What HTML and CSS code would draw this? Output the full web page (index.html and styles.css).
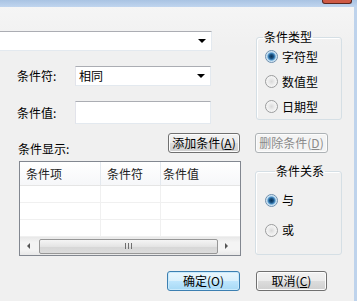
FILE: index.html
```html
<!DOCTYPE html>
<html lang="zh">
<head>
    <meta charset="utf-8">
    <title>条件</title>
    <link rel="stylesheet" href="styles.css">
</head>
<body>
    <div class="window">
        <div class="titlebar"><span class="close"></span></div>
        <div class="client">
            <div class="top">
                <div class="form">
                    <div class="combo wide"><span class="val"></span><span class="arrow"></span></div>
                    <div class="field">
                        <span class="label">条件符:</span>
                        <div class="combo"><span class="val">相同</span><span class="arrow"></span></div>
                    </div>
                    <div class="field">
                        <span class="label">条件值:</span>
                        <div class="textbox"></div>
                    </div>
                </div>
                <fieldset class="group type">
                    <legend>条件类型</legend>
                    <div class="radio"><span class="dot checked"></span>字符型</div>
                    <div class="radio"><span class="dot"></span>数值型</div>
                    <div class="radio"><span class="dot"></span>日期型</div>
                </fieldset>
            </div>

            <div class="actions">
                <span class="label show">条件显示:</span>
                <button class="btn add">添加条件(<u>A</u>)</button>
                <button class="btn del" disabled>删除条件(<u>D</u>)</button>
            </div>

            <div class="middle">
                <div class="list">
                    <div class="row head">
                        <span>条件项</span><span>条件符</span><span>条件值</span>
                    </div>
                    <div class="row"><span></span><span></span><span></span></div>
                    <div class="row"><span></span><span></span><span></span></div>
                    <div class="row"><span></span><span></span><span></span></div>
                    <div class="hscroll">
                        <span class="arr left"></span>
                        <span class="thumb"><span class="grip"></span></span>
                        <span class="arr right"></span>
                    </div>
                </div>
                <fieldset class="group rel">
                    <legend>条件关系</legend>
                    <div class="radio"><span class="dot checked"></span>与</div>
                    <div class="radio"><span class="dot"></span>或</div>
                </fieldset>
            </div>

            <div class="footer">
                <button class="btn ok">确定(O)</button>
                <button class="btn cancel">取消(<u>C</u>)</button>
            </div>
        </div>
    </div>
</body>
</html>
```
FILE: styles.css
```css
* {
    box-sizing: border-box;
}

body {
    margin: 0;
    font-family: "Noto Sans CJK SC", "Noto Sans", sans-serif;
    font-size: 12px;
    line-height: 14px;
    color: #000;
    background: #f0f0f0;
}

.window {
    width: 357px;
    height: 301px;
    display: flex;
    flex-direction: column;
    overflow: hidden;
}

.titlebar {
    height: 7px;
    background: linear-gradient(#a9c3e3, #c0d5ee);
    display: flex;
    justify-content: flex-end;
}

.close {
    width: 30px;
    height: 4px;
    margin-right: 5px;
    background: #cf5a45;
    border: 1px solid #5a2620;
    border-top: none;
    border-radius: 0 0 3px 3px;
}

.client {
    flex: 1;
    background: linear-gradient(#f5f5f5, #f0f0f0 40px);
    border-right: 3px solid #bed3ec;
}

/* top part */
.top {
    display: flex;
    align-items: flex-start;
    margin-top: 24px;
}

.form {
    width: 213px;
    flex-shrink: 0;
}

.combo {
    height: 20px;
    width: 136px;
    flex-shrink: 0;
    background: #fff;
    border: 1px solid #abadb3;
    border-color: #abadb3 #e3e9ef #e3e9ef #e2e3ea;
    display: flex;
    align-items: center;
    justify-content: space-between;
    padding: 0 5px 0 3px;
}

.combo.wide {
    width: 212px;
    border-left: none;
}

.arrow {
    width: 0;
    height: 0;
    border-left: 4px solid transparent;
    border-right: 4px solid transparent;
    border-top: 4px solid #000;
}

.field {
    display: flex;
    align-items: center;
    margin-top: 15px;
}

.label {
    width: 75px;
    flex-shrink: 0;
    padding-left: 17px;
}

.textbox {
    width: 136px;
    height: 23px;
    flex-shrink: 0;
    background: #fff;
    border: 1px solid #abadb3;
    border-color: #abadb3 #e3e9ef #e3e9ef #e2e3ea;
}

/* group boxes */
.group {
    margin: 0;
    padding: 0 0 0 8px;
    border: 1px solid #d5dfe5;
    border-radius: 3px;
    box-shadow: inset 1px 1px 0 #fff;
}

.group legend {
    padding: 0 1px;
    line-height: 14px;
}

.type {
    width: 86px;
    margin-left: 43px;
    margin-top: -1px;
}

.type legend {
    margin-left: -2px;
}

.radio {
    height: 25px;
    display: flex;
    align-items: center;
}

.dot {
    width: 13px;
    height: 13px;
    border-radius: 50%;
    border: 1px solid #9b9c9d;
    background: radial-gradient(circle at 50% 50%, #d9d9d9 0, #ececec 3px, #f8f8f8 6px);
    margin-right: 4px;
}

.dot.checked {
    border-color: #6e8fae;
    background: radial-gradient(circle at 50% 50%, #0a3257 0, #19507f 2px, #4d92c8 3.5px, #b9d9ef 4.5px, #eef5fa 6px);
}

/* buttons row */
.actions {
    display: flex;
    align-items: flex-start;
    margin-top: 9px;
}

.label.show {
    width: 168px;
    padding-left: 18px;
    margin-top: 9px;
}

.btn {
    font-family: "Noto Sans CJK SC", "Noto Sans", sans-serif;
    font-size: 12px;
    line-height: 14px;
    height: 20px;
    padding: 0;
    color: #000;
    border: 1px solid #707070;
    border-radius: 3px;
    background: linear-gradient(#f2f2f2 0, #ebebeb 50%, #dddddd 50%, #cfcfcf 100%);
    box-shadow: inset 0 0 0 1px #fcfcfc;
}

.add {
    width: 72px;
}

.del {
    width: 73px;
    margin-left: 15px;
    color: #8a8a8a;
    border-color: #adb2b5;
    background: #f4f4f4;
}

/* list */
.middle {
    display: flex;
    align-items: flex-start;
    margin-top: 5px;
}

.list {
    width: 222px;
    height: 95px;
    margin-left: 19px;
    border: 1px solid #828790;
    background: #fff;
    display: flex;
    flex-direction: column;
}

.row {
    display: grid;
    grid-template-columns: 81px 60px 1fr;
    height: 17px;
    border-bottom: 1px solid #f0f0f0;
}

.row span {
    border-right: 1px solid #f0f0f0;
}

.row span:last-child {
    border-right: none;
}

.row.head {
    height: 24px;
    border-bottom: 1px solid #e5e5e5;
    background: linear-gradient(#ffffff, #f6f7f9);
    align-items: center;
}

.row.head span {
    height: 100%;
    display: flex;
    align-items: center;
    padding-left: 6px;
    color: #222;
    border-right-color: #e3e8ee;
}

.row.head span:last-child {
    padding-left: 2px;
}

.hscroll {
    flex: 1;
    display: flex;
    align-items: center;
    background: linear-gradient(#e8e8e8, #f4f4f4 30%, #f4f4f4 70%, #e8e8e8);
    padding: 0 7px;
}

.arr {
    width: 0;
    height: 0;
    border-top: 3px solid transparent;
    border-bottom: 3px solid transparent;
}

.arr.left {
    border-right: 3px solid #555;
}

.arr.right {
    border-left: 3px solid #555;
}

.thumb {
    width: 179px;
    height: 15px;
    margin: 0 7px 0 9px;
    border: 1px solid #979797;
    border-radius: 2px;
    background: linear-gradient(#f5f5f5, #e4e4e4 50%, #d6d6d6 51%, #dcdcdc);
    display: flex;
    align-items: center;
    justify-content: center;
}

.grip {
    width: 7px;
    height: 6px;
    background: repeating-linear-gradient(90deg, #6f6f6f 0, #6f6f6f 1px, transparent 1px, transparent 3px);
}

.rel {
    width: 87px;
    height: 91px;
    margin-left: 14px;
    margin-top: 3px;
    padding-left: 9px;
    padding-top: 7px;
}

.rel legend {
    margin-left: 10px;
}

.rel .radio {
    height: 30px;
}

/* footer */
.footer {
    display: flex;
    margin-top: 15px;
    padding-left: 167px;
    gap: 16px;
}

.ok {
    width: 73px;
    border-color: #3c7fb1;
    background: linear-gradient(#eaf6fd 0, #d9f0fc 50%, #bee6fd 50%, #a7d9f5 100%);
    box-shadow: inset 0 0 0 1px #c9eafc;
}

.cancel {
    width: 71px;
}
```
